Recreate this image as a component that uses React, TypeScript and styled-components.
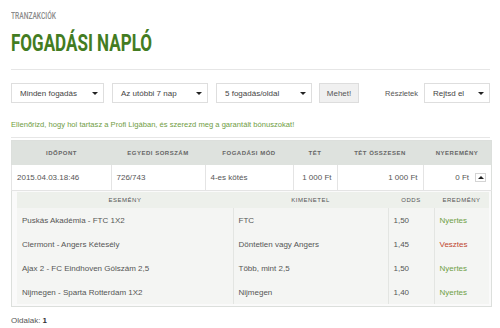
import React from "react";
import styled, { createGlobalStyle } from "styled-components";

const GlobalStyle = createGlobalStyle`
  body {
    margin: 0;
    background: #ffffff;
    font-family: "Liberation Sans", Arial, sans-serif;
    color: #555555;
  }
`;

const Page = styled.div`
  width: 479px;
  padding: 0 10px 0 11px;
`;

const Crumb = styled.div`
  padding-top: 11px;
  height: 10px;
  line-height: 10px;
  font-family: Roboto, "Liberation Sans", sans-serif;
  font-weight: 500;
  font-size: 9px;
  color: #8a8a8a;
  transform: scaleX(0.74);
  transform-origin: left;
  white-space: nowrap;
`;

const Title = styled.h1`
  margin: 8px 0 0;
  height: 30px;
  line-height: 30px;
  font-family: Roboto, "Liberation Sans", sans-serif;
  font-weight: 700;
  font-size: 23px;
  color: #437c22;
  transform: scaleX(0.74);
  transform-origin: left;
  white-space: nowrap;
`;

const Rule = styled.div<{ $top: number }>`
  margin-top: ${(p) => p.$top}px;
  border-top: 1px solid #e6e6e6;
`;

const FilterBar = styled.div`
  margin-top: 13px;
  height: 20px;
  display: flex;
  align-items: center;
`;

const Select = styled.div<{ $width: number; $gap?: number }>`
  box-sizing: border-box;
  flex-shrink: 0;
  width: ${(p) => p.$width}px;
  height: 20px;
  margin-right: ${(p) => p.$gap ?? 0}px;
  padding: 0 5px 0 8px;
  display: flex;
  align-items: center;
  justify-content: space-between;
  border: 1px solid #dedede;
  background: #fff;
  font-size: 8px;
  color: #444;
`;

const Caret = styled.span<{ $up?: boolean }>`
  width: 0;
  height: 0;
  border-left: 3px solid transparent;
  border-right: 3px solid transparent;
  ${(p) =>
    p.$up ? "border-bottom: 3px solid #222;" : "border-top: 3px solid #222;"}
`;

const Button = styled.div`
  box-sizing: border-box;
  flex-shrink: 0;
  width: 40px;
  height: 20px;
  display: flex;
  align-items: center;
  justify-content: center;
  border: 1px solid #dddddd;
  background: #f0f0f0;
  font-size: 8px;
  color: #555;
`;

const Label = styled.span`
  margin-left: auto;
  margin-right: 6px;
  font-size: 7.5px;
  color: #555;
  white-space: nowrap;
`;

const Notice = styled.div`
  margin-top: 17px;
  line-height: 10px;
  font-size: 7.6px;
  color: #6f9d3f;
`;

const Table = styled.table`
  margin-top: 2px;
  width: 479px;
  border-collapse: collapse;
  table-layout: fixed;
  border: 1px solid #dcdfdc;
`;

const Th = styled.th<{ $w: number }>`
  width: ${(p) => p.$w}px;
  height: 24px;
  padding: 0;
  background: #dee2de;
  font-size: 6px;
  font-weight: 700;
  letter-spacing: 0.5px;
  color: #666;
  text-align: center;
`;

const Td = styled.td<{ $right?: boolean }>`
  height: 25px;
  padding: 0 5px;
  border-left: 1px solid #e4e4e4;
  font-size: 8px;
  color: #555;
  text-align: ${(p) => (p.$right ? "right" : "left")};
  white-space: nowrap;
`;

const Toggle = styled.span`
  display: inline-flex;
  align-items: center;
  justify-content: center;
  box-sizing: border-box;
  width: 11px;
  height: 9px;
  margin-left: 6px;
  vertical-align: middle;
  border: 1px solid #d4d4d4;
  background: #fff;
`;

const NestedCell = styled.td`
  padding: 1px 2px 2px 5px;
  border-top: 1px solid #e4e4e4;
  background: #fafafa;
`;

const Inner = styled.table`
  width: 100%;
  border-collapse: collapse;
  table-layout: fixed;
`;

const SubTh = styled.th<{ $w?: number }>`
  ${(p) => (p.$w ? `width: ${p.$w}px;` : "")}
  height: 16px;
  padding: 0;
  background: #edf0eb;
  font-size: 6px;
  font-weight: 400;
  letter-spacing: 0.5px;
  color: #555;
  text-align: center;
`;

const SubTd = styled.td<{ $result?: "win" | "lose" }>`
  height: 24px;
  padding: 0 5px;
  background: #f4f5f3;
  border-left: 1px solid #e3e5e2;
  font-size: 8px;
  white-space: nowrap;
  color: ${(p) =>
    p.$result === "win" ? "#6f9f45" : p.$result === "lose" ? "#c0462e" : "#555"};
  &:first-child {
    border-left: none;
  }
`;

const Pager = styled.div`
  margin-top: 9px;
  line-height: 10px;
  font-size: 8px;
  color: #555;
  b {
    color: #333;
  }
`;

const events = [
  { name: "Puskás Akadémia - FTC 1X2", pick: "FTC", odds: "1,50", win: true },
  { name: "Clermont - Angers Kétesély", pick: "Döntetlen vagy Angers", odds: "1,45", win: false },
  { name: "Ajax 2 - FC Eindhoven Gólszám 2,5", pick: "Több, mint 2,5", odds: "1,50", win: true },
  { name: "Nijmegen - Sparta Rotterdam 1X2", pick: "Nijmegen", odds: "1,40", win: true },
];

export default function App() {
  return (
    <Page>
      <GlobalStyle />
      <Crumb>TRANZAKCIÓK</Crumb>
      <Title>FOGADÁSI NAPLÓ</Title>
      <Rule $top={10} />

      <FilterBar>
        <Select $width={93} $gap={8}>
          Minden fogadás <Caret />
        </Select>
        <Select $width={96} $gap={8}>
          Az utóbbi 7 nap <Caret />
        </Select>
        <Select $width={96} $gap={7}>
          5 fogadás/oldal <Caret />
        </Select>
        <Button>Mehet!</Button>
        <Label>Részletek</Label>
        <Select $width={66}>
          Rejtsd el <Caret />
        </Select>
      </FilterBar>

      <Notice>
        Ellenőrizd, hogy hol tartasz a Profi Ligában, és szerezd meg a garantált bónuszokat!
      </Notice>
      <Rule $top={7} />

      <Table>
        <thead>
          <tr>
            <Th $w={99}>IDŐPONT</Th>
            <Th $w={94}>EGYEDI SORSZÁM</Th>
            <Th $w={88}>FOGADÁSI MÓD</Th>
            <Th $w={44}>TÉT</Th>
            <Th $w={86}>TÉT ÖSSZESEN</Th>
            <Th $w={68}>NYEREMÉNY</Th>
          </tr>
        </thead>
        <tbody>
          <tr>
            <Td>2015.04.03.18:46</Td>
            <Td>726/743</Td>
            <Td>4-es kötés</Td>
            <Td $right>1 000 Ft</Td>
            <Td $right>1 000 Ft</Td>
            <Td $right>
              0 Ft
              <Toggle>
                <Caret $up />
              </Toggle>
            </Td>
          </tr>
          <tr>
            <NestedCell colSpan={6}>
              <Inner>
                <thead>
                  <tr>
                    <SubTh $w={216}>ESEMÉNY</SubTh>
                    <SubTh $w={155}>KIMENETEL</SubTh>
                    <SubTh $w={46}>ODDS</SubTh>
                    <SubTh>EREDMÉNY</SubTh>
                  </tr>
                </thead>
                <tbody>
                  {events.map((e) => (
                    <tr key={e.name}>
                      <SubTd>{e.name}</SubTd>
                      <SubTd>{e.pick}</SubTd>
                      <SubTd>{e.odds}</SubTd>
                      <SubTd $result={e.win ? "win" : "lose"}>
                        {e.win ? "Nyertes" : "Vesztes"}
                      </SubTd>
                    </tr>
                  ))}
                </tbody>
              </Inner>
            </NestedCell>
          </tr>
        </tbody>
      </Table>

      <Pager>
        Oldalak: <b>1</b>
      </Pager>
    </Page>
  );
}
